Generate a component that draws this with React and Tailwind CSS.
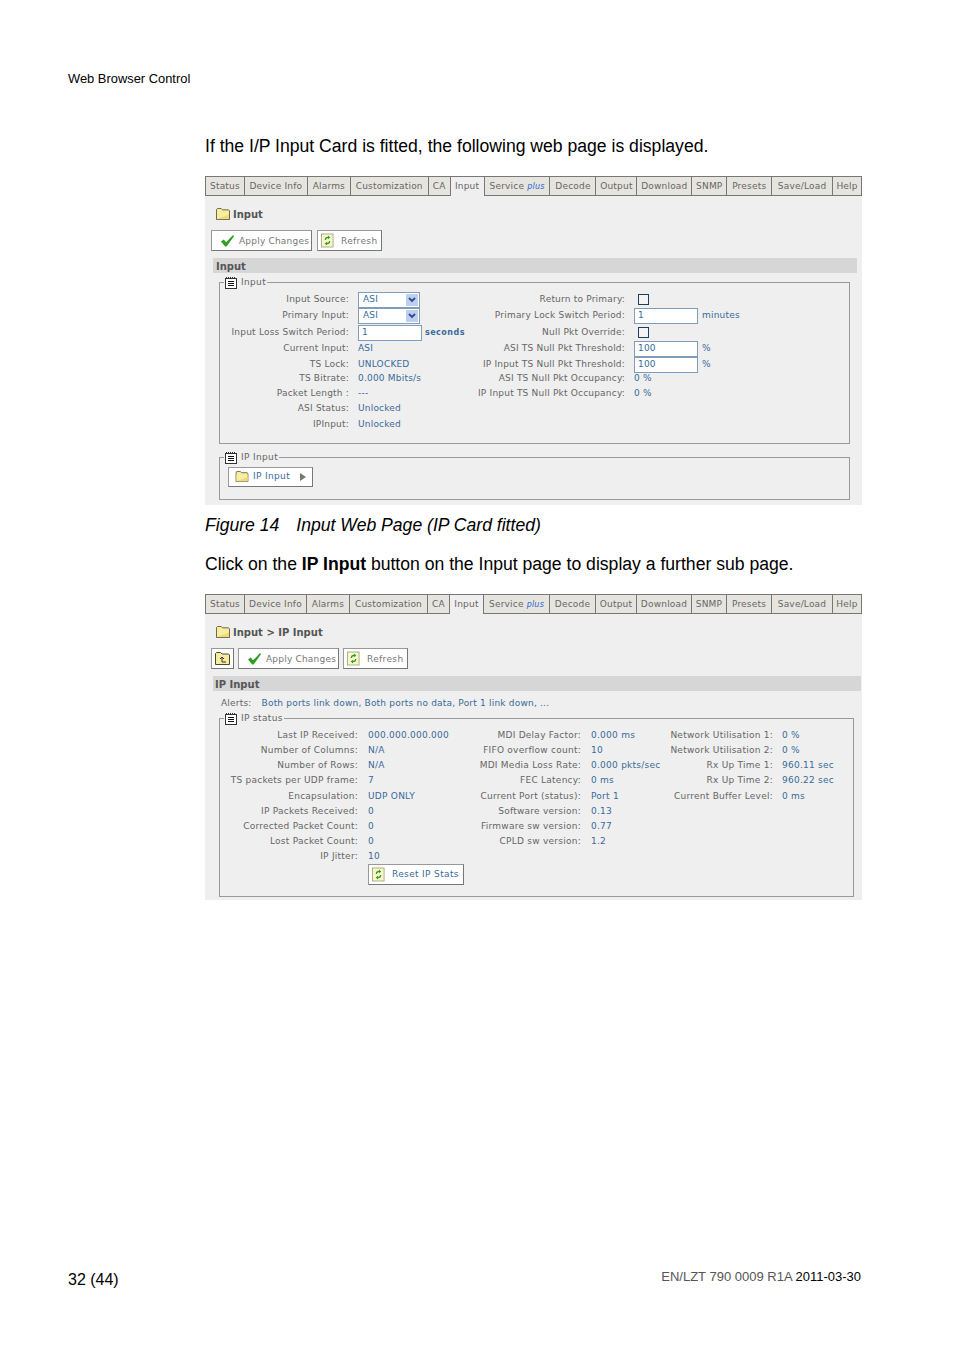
const tabW = [40, 63, 43, 78, 22, 34, 66, 46, 41, 55, 35, 45, 61, 29];
const tabNames = ["Status", "Device Info", "Alarms", "Customization", "CA", "Input", "Service", "Decode", "Output", "Download", "SNMP", "Presets", "Save/Load", "Help"];

function Folder({ className = "w-[14px] h-[12px]" }) {
  return (
    <svg viewBox="0 0 15 13" className={className}>
      <path d="M0.5 12.5V1.5L1.5 0.5H5.5L7 2H13.5L14.5 3V12.5Z" fill="#f7eda0" stroke="#5d5a3c" />
      <path d="M1 4H14V12H1Z" fill="#f9ee9e" />
      <path d="M1 12L14 7V12Z" fill="#eeda7c" />
    </svg>
  );
}
function Check() {
  return (
    <svg viewBox="0 0 16 14" className="w-[15px] h-[13px]">
      <path d="M1 8L4 6L6.5 9L14 1L15 2.5L7 13.5H5.5Z" fill="#2f9e22" />
    </svg>
  );
}
function RefreshIcon() {
  return (
    <svg viewBox="0 0 14 15" className="w-[13px] h-[15px]">
      <rect x="0.5" y="0.5" width="12.5" height="14" fill="#fbf7c8" stroke="#a8a888" />
      <path d="M4 7C4 4.5 5.5 3.5 7.5 3.5V2L10 4.2L7.5 6.2V5C6.3 5 5.5 5.6 5.3 7Z" fill="#2c9a2c" />
      <path d="M10 8C10 10.5 8.5 11.5 6.5 11.5V13L4 10.8L6.5 8.8V10C7.7 10 8.5 9.4 8.7 8Z" fill="#2c9a2c" />
    </svg>
  );
}
function UpFolder() {
  return (
    <svg viewBox="0 0 15 13" className="w-[15px] h-[13px]">
      <path d="M0.5 12.5V1.5L1.5 0.5H5.5L7 2H13.5L14.5 3V12.5Z" fill="#f7eda0" stroke="#4a4830" />
      <path d="M7 5V10H11M5 7L7 5L9 7" fill="none" stroke="#333" />
    </svg>
  );
}
function DocIcon() {
  return (
    <svg viewBox="0 0 12 12" className="w-[12px] h-[12px]">
      <rect x="0.5" y="1.5" width="11" height="10" fill="#fff" stroke="#333" />
      <path d="M1 0.5H11" stroke="#333" strokeDasharray="1 1" />
      <path d="M3 4.5H9M3 6.5H9M3 8.5H9" stroke="#111" />
    </svg>
  );
}
function Tabs({ offset = false }) {
  return (
    <div className="flex h-[20px] text-[9px] tracking-[0.2px] text-[#666]">
      {tabNames.map((name, i) => {
        const active = name === "Input";
        return (
          <div
            key={name}
            style={{ width: tabW[i] - (offset && i === 1 ? 1 : 0) }}
            className={
              active
                ? "flex items-center justify-center pt-[1px] border-t border-r border-[#777] bg-[#efefef]"
                : "flex items-center justify-center pt-[1px] border-t border-r border-b border-[#777] bg-[#e6e4df] first:border-l"
            }
          >
            {name}
            {name === "Service" && <span className="italic text-[8px] text-[#3366cc] ml-[3px]">plus</span>}
          </div>
        );
      })}
    </div>
  );
}
function Btn({ icon, label, w, blue, gap = "ml-[7px]" }) {
  return (
    <div style={{ width: w }} className={"flex items-center h-[21px] bg-white border border-[#999] border-r-[#777] border-b-[#777] pl-[3px] text-[9px] tracking-[0.35px] whitespace-nowrap " + (blue ? "text-[#3a6a9a]" : "text-[#777]")}>
      {icon}
      {label && <span className={"pt-[2px] " + gap}>{label}</span>}
    </div>
  );
}
function Select() {
  return (
    <div className="flex items-center justify-between w-[62px] h-[16px] bg-white border border-[#7f9db9] pl-[4px] pr-[1px] text-[#3a6a9a]">
      ASI
      <span className="flex items-center justify-center w-[12px] h-[12px] bg-[#c0cff0]">
        <svg viewBox="0 0 8 6" className="w-[8px] h-[6px]"><path d="M1 1L4 4L7 1" fill="none" stroke="#2a4a8a" strokeWidth="1.8" /></svg>
      </span>
    </div>
  );
}
function TextBox({ v, w = "w-[64px]" }) {
  return <div className={"flex items-center h-[16px] bg-white border border-[#7f9db9] pl-[3px] text-[#3a6a9a] " + w}>{v}</div>;
}
function Box() {
  return <div className="ml-[4px] w-[11px] h-[11px] border border-[#1c3f5e] bg-[#f4f4f4]" />;
}
function Legend({ children }) {
  return (
    <legend className="ml-[4px] pr-[1px] pl-[1px] flex items-center gap-[4px] text-[9px] tracking-[0.35px] text-[#666]">
      <DocIcon />
      {children}
    </legend>
  );
}
const V = ({ children }) => <span className="text-[#3a6a9a] whitespace-nowrap">{children}</span>;

const inputRows = [
  ["Input Source:", <Select />, "Return to Primary:", <Box />, "h-[16px]"],
  ["Primary Input:", <Select />, "Primary Lock Switch Period:", <div className="flex items-center gap-[4px]"><TextBox v="1" /><V>minutes</V></div>, "h-[17px]"],
  ["Input Loss Switch Period:", <div className="flex items-center gap-[3px]"><TextBox v="1" /><span className="text-[#3a6a9a] font-bold text-[8px] tracking-[0.5px]">seconds</span></div>, "Null Pkt Override:", <Box />, "h-[16px]"],
  ["Current Input:", <V>ASI</V>, "ASI TS Null Pkt Threshold:", <div className="flex items-center gap-[4px]"><TextBox v="100" /><V>%</V></div>, "h-[16px]"],
  ["TS Lock:", <V>UNLOCKED</V>, "IP Input TS Null Pkt Threshold:", <div className="flex items-center gap-[4px]"><TextBox v="100" /><V>%</V></div>, "h-[15px]"],
  ["TS Bitrate:", <V>0.000 Mbits/s</V>, "ASI TS Null Pkt Occupancy:", <V>0 %</V>, "h-[15px]"],
  ["Packet Length :", <V>---</V>, "IP Input TS Null Pkt Occupancy:", <V>0 %</V>, "h-[15px]"],
  ["ASI Status:", <V>Unlocked</V>, "", null, "h-[15px]"],
  ["IPInput:", <V>Unlocked</V>, "", null, "h-[16px]"],
];
const statusRows = [
  ["Last IP Received:", "000.000.000.000", "MDI Delay Factor:", "0.000 ms", "Network Utilisation 1:", "0 %"],
  ["Number of Columns:", "N/A", "FIFO overflow count:", "10", "Network Utilisation 2:", "0 %"],
  ["Number of Rows:", "N/A", "MDI Media Loss Rate:", "0.000 pkts/sec", "Rx Up Time 1:", "960.11 sec"],
  ["TS packets per UDP frame:", "7", "FEC Latency:", "0 ms", "Rx Up Time 2:", "960.22 sec"],
  ["Encapsulation:", "UDP ONLY", "Current Port (status):", "Port 1", "Current Buffer Level:", "0 ms"],
  ["IP Packets Received:", "0", "Software version:", "0.13", "", ""],
  ["Corrected Packet Count:", "0", "Firmware sw version:", "0.77", "", ""],
  ["Lost Packet Count:", "0", "CPLD sw version:", "1.2", "", ""],
  ["IP Jitter:", "10", "", "", "", ""],
];

export default function App() {
  return (
    <div className="flex flex-col h-[1350px] bg-white pl-[68px] pr-[93px] text-black" style={{ fontFamily: '"Liberation Sans", Arial, sans-serif' }}>
      <div className="mt-[71px] text-[12.9px] leading-[16px]">Web Browser Control</div>
      <div className="ml-[137px]">
        <p className="mt-[48px] text-[17.6px] leading-[22px]">If the I/P Input Card is fitted, the following web page is displayed.</p>

        <div className="mt-[19px] w-[657px] h-[329px] bg-[#efefef]" style={{ fontFamily: '"DejaVu Sans", Verdana, sans-serif' }}>
          <Tabs />
          <div className="flex items-center gap-[3px] ml-[11px] mt-[11px] h-[14px] text-[10px] font-bold text-[#555]">
            <Folder />
            Input
          </div>
          <div className="flex gap-[5px] ml-[6px] mt-[9px]">
            <Btn w={101} gap="ml-[4px] tracking-[0.2px]" icon={<span className="ml-[5px] flex"><Check /></span>} label="Apply Changes" />
            <Btn w={65} icon={<RefreshIcon />} label="Refresh" />
          </div>
          <div className="ml-[8px] mr-[5px] mt-[7px] h-[15px] bg-[#d6d6d6] pl-[3px] pt-[1px] flex items-center text-[10px] font-bold text-[#555]">Input</div>
          <fieldset className="ml-[14px] mr-[12px] h-[168px] mt-[3px] border border-[#999] text-[9px] tracking-[0.2px] text-[#666]">
            <Legend>Input</Legend>
            <div className="grid grid-cols-[138px_107px_169px_1fr] mt-[2px]">
              {inputRows.map((r, i) => (
                <div key={i} className={"col-span-4 grid grid-cols-subgrid items-center " + r[4]}>
                  <div className="text-right pr-[9px] whitespace-nowrap">{r[0]}</div>
                  <div>{r[1]}</div>
                  <div className="text-right pr-[9px] whitespace-nowrap">{r[2]}</div>
                  <div>{r[3]}</div>
                </div>
              ))}
            </div>
          </fieldset>
          <fieldset className="ml-[14px] mr-[12px] mt-[7px] h-[49px] border border-[#999] text-[9px] tracking-[0.35px] text-[#666]">
            <Legend>IP Input</Legend>
            <div className="ml-[8px] mt-[2px]">
              <div className="flex items-center w-[85px] h-[20px] bg-white border border-[#999] border-r-[#777] border-b-[#777] pl-[6px] text-[#3a6a9a]">
                <Folder className="w-[14px] h-[11px]" />
                <span className="ml-[4px] pt-[1px]">IP Input</span>
                <svg viewBox="0 0 6 8" className="ml-[10px] w-[6px] h-[8px]"><path d="M0 0L6 4L0 8Z" fill="#777" /></svg>
              </div>
            </div>
          </fieldset>
        </div>

        <p className="mt-[9px] text-[17.6px] leading-[22px] italic whitespace-nowrap">Figure 14<span className="ml-[17px]">Input Web Page (IP Card fitted)</span></p>
        <p className="mt-[17px] text-[17.6px] leading-[22px]">Click on the <b>IP Input</b> button on the Input page to display a further sub page.</p>

        <div className="mt-[19px] w-[657px] h-[306px] bg-[#efefef]" style={{ fontFamily: '"DejaVu Sans", Verdana, sans-serif' }}>
          <Tabs offset />
          <div className="flex items-center gap-[3px] ml-[11px] mt-[11px] h-[14px] text-[10px] font-bold text-[#555]">
            <Folder />
            Input &gt; IP Input
          </div>
          <div className="flex gap-[4px] ml-[6px] mt-[9px]">
            <Btn w={23} icon={<UpFolder />} />
            <Btn w={101} gap="ml-[4px] tracking-[0.2px]" icon={<span className="ml-[5px] flex"><Check /></span>} label="Apply Changes" />
            <Btn w={65} icon={<RefreshIcon />} label="Refresh" />
          </div>
          <div className="ml-[8px] mr-[1px] mt-[7px] h-[15px] bg-[#d6d6d6] pl-[2px] pt-[1px] flex items-center text-[10px] font-bold text-[#555]">IP Input</div>
          <div className="flex items-center h-[16px] mt-[4px] ml-[16px] pt-[1px] text-[9px] tracking-[0.2px] text-[#666]">
            <span>Alerts:</span>
            <span className="ml-[10px] text-[#3a6a9a]">Both ports link down, Both ports no data, Port 1 link down, ...</span>
          </div>
          <fieldset className="ml-[14px] mr-[8px] h-[185px] mt-[1px] border border-[#999] text-[9px] tracking-[0.25px] text-[#666]">
            <Legend>IP status</Legend>
            <div className="grid grid-cols-[148px_82px_141px_74px_117px_1fr] mt-[3px]">
              {statusRows.map((r, i) => (
                <div key={i} className={"col-span-6 grid grid-cols-subgrid items-center " + (i === 4 ? "h-[16px]" : "h-[15px]")}>
                  <div className="text-right pr-[10px] whitespace-nowrap">{r[0]}</div>
                  <V>{r[1]}</V>
                  <div className="text-right pr-[10px] whitespace-nowrap">{r[2]}</div>
                  <V>{r[3]}</V>
                  <div className="text-right pr-[9px] whitespace-nowrap">{r[4]}</div>
                  <V>{r[5]}</V>
                </div>
              ))}
            </div>
            <div className="ml-[148px] -mt-[1px]">
              <Btn w={96} blue icon={<RefreshIcon />} label="Reset IP Stats" />
            </div>
          </fieldset>
        </div>
      </div>
      <div className="mt-auto mb-[61px] flex items-end justify-between">
        <span className="text-[16px] leading-[18px]">32 (44)</span>
        <span className="text-[13px] leading-[18px] mb-[3px] text-[#555]">EN/LZT 790 0009 R1A <span className="text-black">2011-03-30</span></span>
      </div>
    </div>
  );
}
